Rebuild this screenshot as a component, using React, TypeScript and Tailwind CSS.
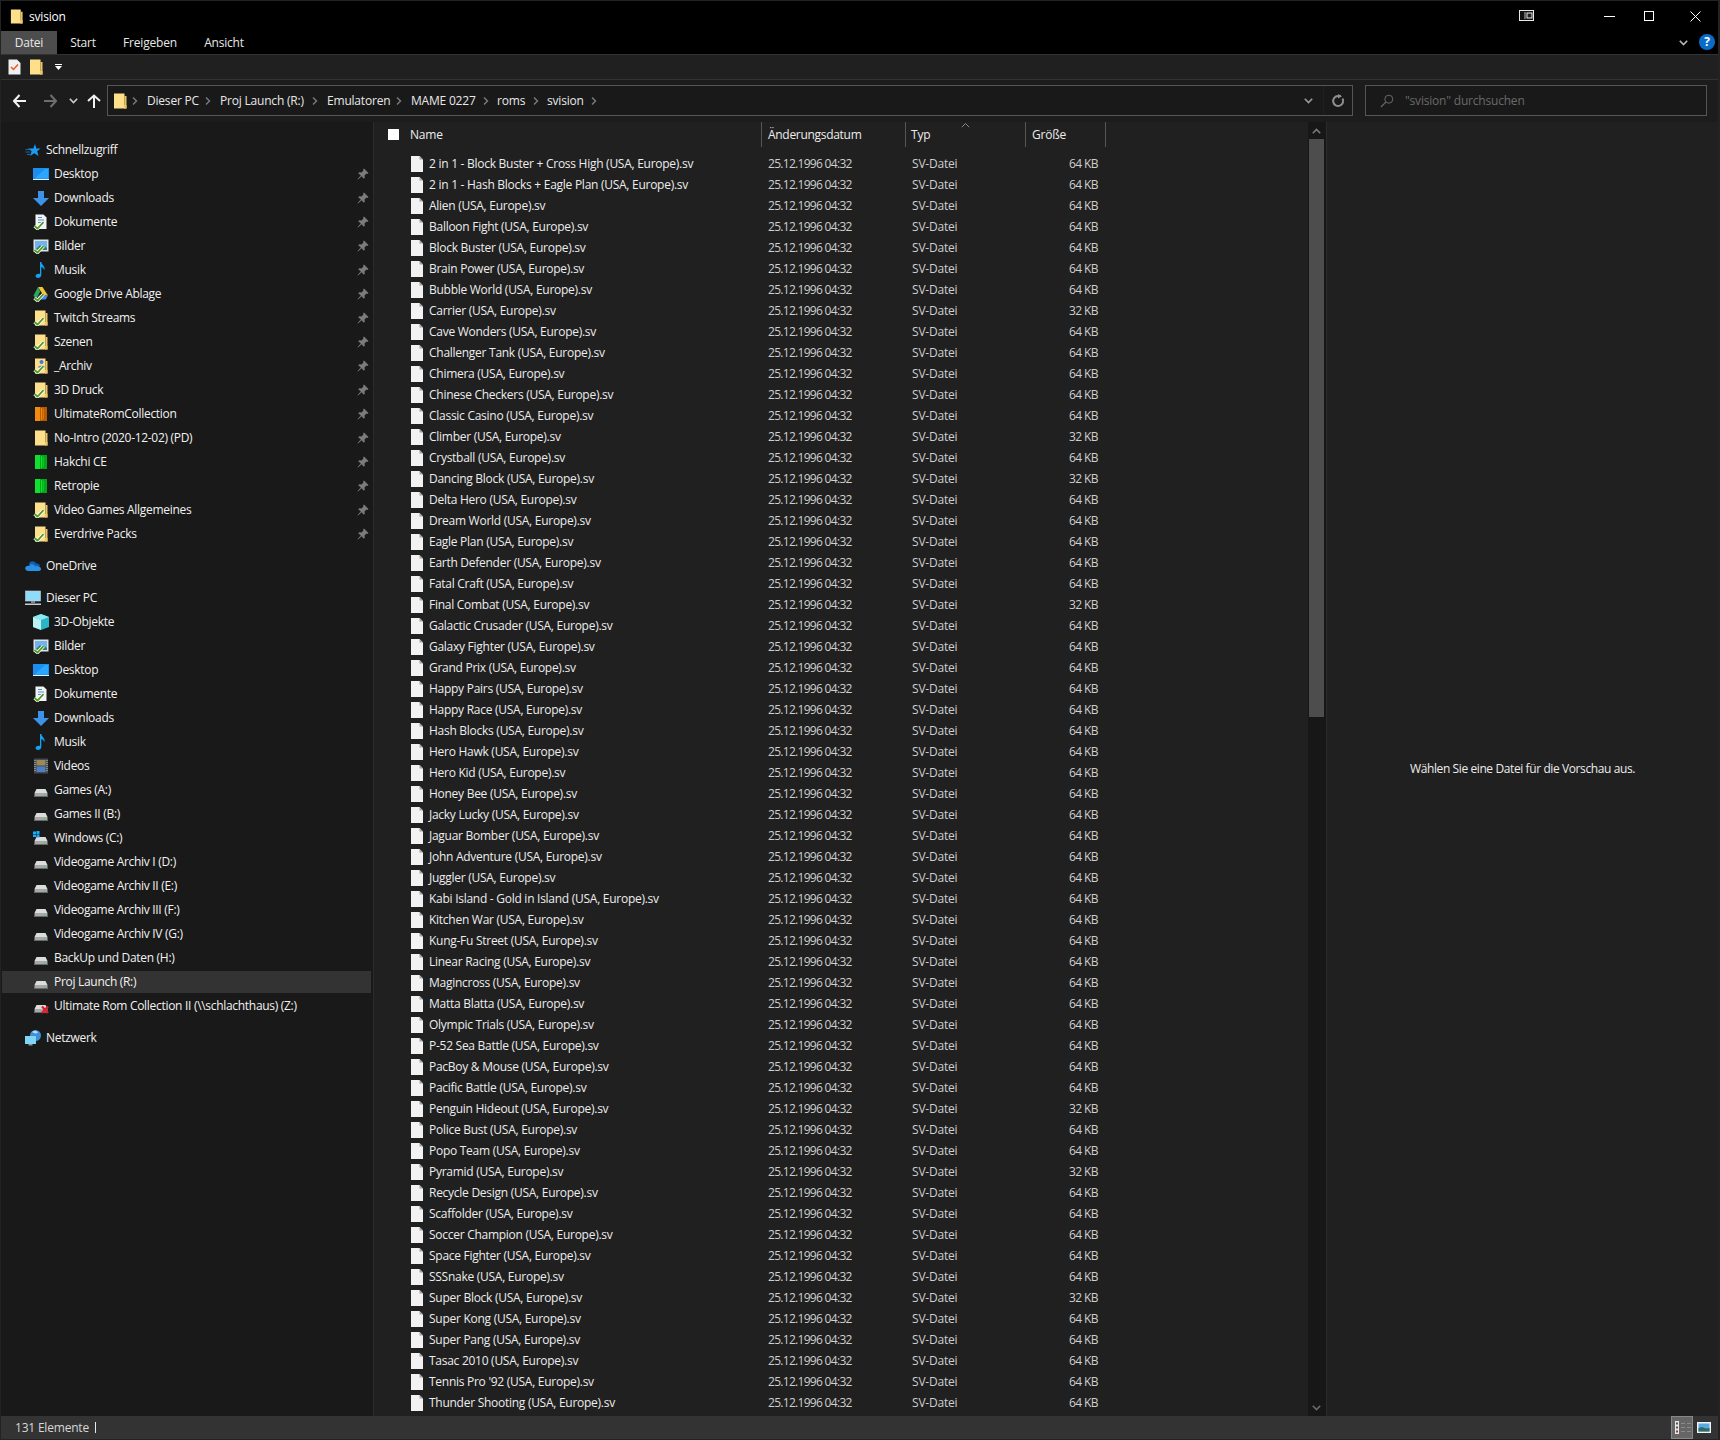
import React from 'react';

const files: [string, number][] = [
  ['2 in 1 - Block Buster + Cross High (USA, Europe).sv', 64],
  ['2 in 1 - Hash Blocks + Eagle Plan (USA, Europe).sv', 64],
  ['Alien (USA, Europe).sv', 64],
  ['Balloon Fight (USA, Europe).sv', 64],
  ['Block Buster (USA, Europe).sv', 64],
  ['Brain Power (USA, Europe).sv', 64],
  ['Bubble World (USA, Europe).sv', 64],
  ['Carrier (USA, Europe).sv', 32],
  ['Cave Wonders (USA, Europe).sv', 64],
  ['Challenger Tank (USA, Europe).sv', 64],
  ['Chimera (USA, Europe).sv', 64],
  ['Chinese Checkers (USA, Europe).sv', 64],
  ['Classic Casino (USA, Europe).sv', 64],
  ['Climber (USA, Europe).sv', 32],
  ['Crystball (USA, Europe).sv', 64],
  ['Dancing Block (USA, Europe).sv', 32],
  ['Delta Hero (USA, Europe).sv', 64],
  ['Dream World (USA, Europe).sv', 64],
  ['Eagle Plan (USA, Europe).sv', 64],
  ['Earth Defender (USA, Europe).sv', 64],
  ['Fatal Craft (USA, Europe).sv', 64],
  ['Final Combat (USA, Europe).sv', 32],
  ['Galactic Crusader (USA, Europe).sv', 64],
  ['Galaxy Fighter (USA, Europe).sv', 64],
  ['Grand Prix (USA, Europe).sv', 64],
  ['Happy Pairs (USA, Europe).sv', 64],
  ['Happy Race (USA, Europe).sv', 64],
  ['Hash Blocks (USA, Europe).sv', 64],
  ['Hero Hawk (USA, Europe).sv', 64],
  ['Hero Kid (USA, Europe).sv', 64],
  ['Honey Bee (USA, Europe).sv', 64],
  ['Jacky Lucky (USA, Europe).sv', 64],
  ['Jaguar Bomber (USA, Europe).sv', 64],
  ['John Adventure (USA, Europe).sv', 64],
  ['Juggler (USA, Europe).sv', 64],
  ['Kabi Island - Gold in Island (USA, Europe).sv', 64],
  ['Kitchen War (USA, Europe).sv', 64],
  ['Kung-Fu Street (USA, Europe).sv', 64],
  ['Linear Racing (USA, Europe).sv', 64],
  ['Magincross (USA, Europe).sv', 64],
  ['Matta Blatta (USA, Europe).sv', 64],
  ['Olympic Trials (USA, Europe).sv', 64],
  ['P-52 Sea Battle (USA, Europe).sv', 64],
  ['PacBoy & Mouse (USA, Europe).sv', 64],
  ['Pacific Battle (USA, Europe).sv', 64],
  ['Penguin Hideout (USA, Europe).sv', 32],
  ['Police Bust (USA, Europe).sv', 64],
  ['Popo Team (USA, Europe).sv', 64],
  ['Pyramid (USA, Europe).sv', 32],
  ['Recycle Design (USA, Europe).sv', 64],
  ['Scaffolder (USA, Europe).sv', 64],
  ['Soccer Champion (USA, Europe).sv', 64],
  ['Space Fighter (USA, Europe).sv', 64],
  ['SSSnake (USA, Europe).sv', 64],
  ['Super Block (USA, Europe).sv', 32],
  ['Super Kong (USA, Europe).sv', 64],
  ['Super Pang (USA, Europe).sv', 64],
  ['Tasac 2010 (USA, Europe).sv', 64],
  ["Tennis Pro '92 (USA, Europe).sv", 64],
  ['Thunder Shooting (USA, Europe).sv', 64],
];

function Check() {
  return (
    <g fill="none">
      <path d="M1.5 12 L4.5 14.5 L10.5 8.2" stroke="#fff" strokeWidth="3.4" />
      <path d="M1.5 12 L4.5 14.5 L10.5 8.2" stroke="#4b9a1c" strokeWidth="1.7" />
    </g>
  );
}

function Folder({ color = '#ffe08a', edge = '#e9c468', check, size = 16 }: { color?: string; edge?: string; check?: boolean; size?: number }) {
  return (
    <svg width={size} height={size} viewBox="0 0 16 16" className="shrink-0">
      <path d="M2 0.5 H12.5 V12 L14.5 12 V15.5 H2 Z" fill={color} />
      <path d="M12.5 3 H14.5 V15.5 H12 V12.5 H12.5 Z" fill={edge} />
      {check && <Check />}
    </svg>
  );
}

function BookFolder({ dark, light }: { dark: string; light: string }) {
  return (
    <svg width="16" height="16" viewBox="0 0 16 16" className="shrink-0">
      <rect x="2" y="1" width="12" height="14" fill={dark} />
      <rect x="2" y="1" width="5" height="14" fill={light} />
      <rect x="8" y="2" width="1.2" height="12" fill={light} />
      <rect x="10" y="3" width="1" height="10" fill={light} opacity="0.6" />
    </svg>
  );
}

function DriveIcon({ variant }: { variant?: 'win' | 'x' }) {
  return (
    <svg width="16" height="16" viewBox="0 0 16 16" className="shrink-0">
      <path d="M3.5 7 H12.5 L14.5 11 H1.5 Z" fill="#dcdcdc" />
      <rect x="1.5" y="11" width="13" height="4" fill="#a8a8a8" />
      <rect x="1.5" y="14" width="13" height="1" fill="#6a6a6a" />
      <rect x="11" y="12.5" width="1.4" height="1.2" fill="#3fd24a" />
      {variant === 'win' && (
        <g fill="#13b0ff">
          <rect x="0" y="1.5" width="3" height="2.5" />
          <rect x="3.5" y="1" width="3" height="3" />
          <rect x="0" y="4.5" width="3" height="2.5" />
          <rect x="3.5" y="4.5" width="3" height="3" />
        </g>
      )}
      {variant === 'x' && (
        <path d="M9 8.5 L15 15 M15 8.5 L9 15" fill="none" stroke="#e01a2a" strokeWidth="2.2" />
      )}
    </svg>
  );
}

function DesktopIcon() {
  return (
    <svg width="16" height="16" viewBox="0 0 16 16" className="shrink-0">
      <rect x="0" y="2" width="16" height="12" fill="#1a8ff0" />
      <path d="M1 13 L12 3 H15 V12.5 H1 Z" fill="#2aa6ff" />
      <rect x="0" y="13" width="16" height="1" fill="#e6f2ff" />
    </svg>
  );
}

function DownloadIcon() {
  return (
    <svg width="16" height="16" viewBox="0 0 16 16" className="shrink-0">
      <path d="M5 1 H11 V8 H16 L8 16 L0 8 H5 Z" fill="#3d93e8" />
    </svg>
  );
}

function DocIcon() {
  return (
    <svg width="16" height="16" viewBox="0 0 16 16" className="shrink-0">
      <path d="M2.5 0.5 H10.5 L13.5 3.5 V15 H2.5 Z" fill="#f3f3f3" />
      <path d="M5 3.5 H9 M5 6 H11 M5 8.5 H11" stroke="#4a90d9" strokeWidth="1" />
      <Check />
    </svg>
  );
}

function PicIcon() {
  return (
    <svg width="16" height="16" viewBox="0 0 16 16" className="shrink-0">
      <rect x="0.5" y="1.5" width="15" height="12" fill="#e2e2e2" />
      <rect x="2" y="3" width="12" height="9" fill="#6fb4ea" />
      <path d="M2 12 L7 7 L10 10 L12 8.5 L14 10 V12 Z" fill="#2f7d70" />
      <Check />
    </svg>
  );
}

function PicPlainIcon() {
  return (
    <svg width="14" height="11" viewBox="0 0 14 11" className="shrink-0">
      <rect x="0" y="0" width="14" height="11" fill="#f2f2f2" />
      <rect x="1.5" y="1.5" width="11" height="8" fill="#5ba8e6" />
      <path d="M1.5 9.5 V6 L5 5 L9 6.5 L12.5 6 V9.5 Z" fill="#2f6b60" />
    </svg>
  );
}

function MusicIcon() {
  return (
    <svg width="16" height="16" viewBox="0 0 16 16" className="shrink-0">
      <path d="M7 0 H8.3 C8.6 3 12.5 4 11.5 8.5 C11.2 6.5 9.8 5.5 8.3 5 V13 C8.3 14.8 6.6 16 5 16 C3.4 16 2.4 15 2.6 13.8 C2.8 12.4 5 11.4 7 12 Z" fill="#10a4f4" />
    </svg>
  );
}

function DriveFolderIcon() {
  return (
    <svg width="16" height="16" viewBox="0 0 16 16" className="shrink-0">
      <path d="M5 1 H9.5 L15 9.5 H10.5 Z" fill="#f2c533" />
      <path d="M5 1 L0.5 9.5 L3 13.5 L7.2 5.5 Z" fill="#2fa360" />
      <path d="M6 9.5 H15 L12.7 13.5 H4 Z" fill="#4688f0" />
      <Check />
    </svg>
  );
}

function FolderPersonIcon() {
  return (
    <svg width="16" height="16" viewBox="0 0 16 16" className="shrink-0">
      <path d="M2 0.5 H12.5 V12 L14.5 12 V15.5 H2 Z" fill="#ffe08a" />
      <path d="M12.5 3 H14.5 V15.5 H12 V12.5 H12.5 Z" fill="#e9c468" />
      <circle cx="8.5" cy="4" r="2" fill="#3f7ad6" />
      <path d="M5 9.5 C5 7 12 7 12 9.5 Z" fill="#3f7ad6" />
      <Check />
    </svg>
  );
}

function CloudIcon() {
  return (
    <svg width="16" height="16" viewBox="0 0 16 16" className="shrink-0">
      <path d="M4 6 C5 2.5 9.5 2.5 11 5.5 C13 5.2 14.5 6 15 8 L6 9 Z" fill="#0d5fb8" />
      <path d="M3.5 13 C1 13 0 11.5 0.3 10 C0.6 8.4 2.2 7.5 4 8 C5.5 5.5 9 6 10 8.3 C13 7.5 16 9 16 11 C16 12.3 15 13 14 13 Z" fill="#2b8fe6" />
    </svg>
  );
}

function PcIcon() {
  return (
    <svg width="16" height="16" viewBox="0 0 16 16" className="shrink-0">
      <rect x="0.5" y="1" width="15" height="10" fill="#8fdcfa" />
      <rect x="0.5" y="1" width="15" height="10" fill="none" stroke="#c7d0d6" strokeWidth="0.6" />
      <rect x="6" y="11" width="4" height="2" fill="#7d8a92" />
      <rect x="0" y="13.5" width="16" height="1.5" fill="#c8ced2" />
    </svg>
  );
}

function CubeIcon() {
  return (
    <svg width="16" height="16" viewBox="0 0 16 16" className="shrink-0">
      <path d="M8 0 L16 3 V13 L8 16 L0 13 V3 Z" fill="#2ab6c8" />
      <path d="M8 0 L16 3 L8 6 L0 3 Z" fill="#8ee8ef" />
      <path d="M0 3 L8 6 V16 L0 13 Z" fill="#b8f2f5" />
    </svg>
  );
}

function VideoIcon() {
  return (
    <svg width="16" height="16" viewBox="0 0 16 16" className="shrink-0">
      <rect x="1" y="0.5" width="14" height="15" fill="#454a4e" />
      <rect x="3.5" y="2" width="9" height="5.5" fill="#9a8a5a" />
      <rect x="3.5" y="8.5" width="9" height="5.5" fill="#4d7fc4" />
      <path d="M2 2 V14 M14 2 V14" stroke="#c4c8ca" strokeWidth="1" strokeDasharray="1 1" />
    </svg>
  );
}

function NetworkIcon() {
  return (
    <svg width="16" height="16" viewBox="0 0 16 16" className="shrink-0">
      <circle cx="10.5" cy="5.5" r="5.5" fill="#3f8ed8" />
      <path d="M7 2 C9 0 12 0.5 13 2.5 C11 4 9 3.5 7 2 Z" fill="#b5dbf5" />
      <rect x="0" y="6" width="11" height="8" fill="#7fd4f7" />
      <rect x="3.5" y="14" width="4" height="1.5" fill="#8a959c" />
    </svg>
  );
}

function StarIcon() {
  return (
    <svg width="16" height="16" viewBox="0 0 16 16" className="shrink-0">
      <path d="M10 2 L11.4 6.5 H15.5 L12.2 9.3 L13.5 14 L9.2 11.2 L5 14 L6.6 9.3 L3 6.5 H8.3 Z" fill="#1a9af0" />
      <path d="M0.5 7.5 H4 M0.5 10 H5 M2 12.5 H5" stroke="#1a7fc8" strokeWidth="0.8" />
    </svg>
  );
}

function PinIcon() {
  return (
    <svg width="12" height="12" viewBox="0 0 12 12" className="shrink-0">
      <path d="M7 0.5 L11.5 5 L10.5 6 L9.5 5.5 L7.5 7.5 L7.8 9.8 L6.8 10.8 L4.6 8.2 L1 11.5 L0.5 11 L3.8 7.4 L1.2 5.2 L2.2 4.2 L4.5 4.5 L6.5 2.5 L6 1.5 Z" fill="#7b7b7b" />
    </svg>
  );
}

function FileIcon() {
  return (
    <svg width="12" height="16" viewBox="0 0 12 16" className="shrink-0">
      <path d="M0 0 H8.5 L12 3.5 V16 H0 Z" fill="#f2f2f2" />
      <path d="M8.5 0 V3.5 H12 Z" fill="#a0a0a0" />
    </svg>
  );
}

function Chevron() {
  return (
    <svg width="6" height="8" viewBox="0 0 6 8" className="shrink-0">
      <path d="M1 0.5 L4.5 4 L1 7.5" fill="none" stroke="#7c7c7c" strokeWidth="1.4" />
    </svg>
  );
}

function DownCaret({ color = '#a8a8a8' }: { color?: string }) {
  return (
    <svg width="9" height="6" viewBox="0 0 9 6" className="shrink-0">
      <path d="M0.8 0.8 L4.5 4.5 L8.2 0.8" fill="none" stroke={color} strokeWidth="1.6" />
    </svg>
  );
}

function UpCaret({ color = '#8a8a8a', thin }: { color?: string; thin?: boolean }) {
  return (
    <svg width="9" height="6" viewBox="0 0 9 6" className="shrink-0">
      <path d="M0.8 5.2 L4.5 1.5 L8.2 5.2" fill="none" stroke={color} strokeWidth={thin ? 1 : 1.6} />
    </svg>
  );
}

function NavRow({ icon, label, pin, selected, top }: { icon: React.ReactNode; label: string; pin?: boolean; selected?: boolean; top?: boolean }) {
  return (
    <div className="h-6 py-px pl-[1px] pr-[2px]">
      <div className={`h-full flex items-center pr-[2px] ${top ? 'pl-[23px]' : 'pl-[31px]'} ${selected ? 'bg-[#333333]' : ''}`}>
        {icon}
        <span className="ml-[5px] flex-1 whitespace-nowrap">{label}</span>
        {pin && <PinIcon />}
      </div>
    </div>
  );
}

function Sidebar() {
  return (
    <aside className="w-[373px] shrink-0 bg-[#191919] pt-4 text-[#f2f2f2] border-r border-[#2b2b2b] overflow-hidden tracking-[-0.3px]">
      <NavRow top icon={<StarIcon />} label="Schnellzugriff" />
      <NavRow pin icon={<DesktopIcon />} label="Desktop" />
      <NavRow pin icon={<DownloadIcon />} label="Downloads" />
      <NavRow pin icon={<DocIcon />} label="Dokumente" />
      <NavRow pin icon={<PicIcon />} label="Bilder" />
      <NavRow pin icon={<MusicIcon />} label="Musik" />
      <NavRow pin icon={<DriveFolderIcon />} label="Google Drive Ablage" />
      <NavRow pin icon={<Folder check />} label="Twitch Streams" />
      <NavRow pin icon={<Folder check />} label="Szenen" />
      <NavRow pin icon={<FolderPersonIcon />} label="_Archiv" />
      <NavRow pin icon={<Folder check />} label="3D Druck" />
      <NavRow pin icon={<BookFolder dark="#b85a00" light="#f08a10" />} label="UltimateRomCollection" />
      <NavRow pin icon={<Folder />} label="No-Intro (2020-12-02) (PD)" />
      <NavRow pin icon={<BookFolder dark="#00a818" light="#10e030" />} label="Hakchi CE" />
      <NavRow pin icon={<BookFolder dark="#00a818" light="#10e030" />} label="Retropie" />
      <NavRow pin icon={<Folder check />} label="Video Games Allgemeines" />
      <NavRow pin icon={<Folder check />} label="Everdrive Packs" />
      <div className="h-2" />
      <NavRow top icon={<CloudIcon />} label="OneDrive" />
      <div className="h-2" />
      <NavRow top icon={<PcIcon />} label="Dieser PC" />
      <NavRow icon={<CubeIcon />} label="3D-Objekte" />
      <NavRow icon={<PicIcon />} label="Bilder" />
      <NavRow icon={<DesktopIcon />} label="Desktop" />
      <NavRow icon={<DocIcon />} label="Dokumente" />
      <NavRow icon={<DownloadIcon />} label="Downloads" />
      <NavRow icon={<MusicIcon />} label="Musik" />
      <NavRow icon={<VideoIcon />} label="Videos" />
      <NavRow icon={<DriveIcon />} label="Games (A:)" />
      <NavRow icon={<DriveIcon />} label="Games II (B:)" />
      <NavRow icon={<DriveIcon variant="win" />} label="Windows (C:)" />
      <NavRow icon={<DriveIcon />} label="Videogame Archiv I (D:)" />
      <NavRow icon={<DriveIcon />} label="Videogame Archiv II (E:)" />
      <NavRow icon={<DriveIcon />} label="Videogame Archiv III (F:)" />
      <NavRow icon={<DriveIcon />} label="Videogame Archiv IV (G:)" />
      <NavRow icon={<DriveIcon />} label="BackUp und Daten (H:)" />
      <NavRow selected icon={<DriveIcon />} label="Proj Launch (R:)" />
      <NavRow icon={<DriveIcon variant="x" />} label="Ultimate Rom Collection II (\\schlachthaus) (Z:)" />
      <div className="h-2" />
      <NavRow top icon={<NetworkIcon />} label="Netzwerk" />
    </aside>
  );
}

function HeaderCell({ label, className }: { label: string; className: string }) {
  return (
    <div className={`h-[25px] border-r border-[#555555] flex items-center pt-px ${className}`}>{label}</div>
  );
}

function FileList() {
  return (
    <div className="flex-1 min-w-0 flex flex-col overflow-hidden text-[#ededed]">
      <div className="relative flex pl-[14px] h-[31px] shrink-0">
        <div className="w-[22px] flex items-start pt-[7px]">
          <div className="w-[11px] h-[11px] bg-white" />
        </div>
        <HeaderCell label="Name" className="w-[352px]" />
        <HeaderCell label="Änderungsdatum" className="w-[144px] pl-[6px] tracking-[-0.3px]" />
        <HeaderCell label="Typ" className="w-[120px] pl-[5px]" />
        <HeaderCell label="Größe" className="w-[80px] pl-[6px]" />
        <div className="absolute left-[587px] top-0">
          <UpCaret color="#8a8a8a" thin />
        </div>
      </div>
      <div className="flex-1 overflow-hidden">
        {files.map(([name, size]) => (
          <div key={name} className="h-[21px] flex items-center pl-[37px] whitespace-nowrap">
            <FileIcon />
            <span className="w-[345px] pl-[6px] tracking-[-0.27px]">{name}</span>
            <span className="w-[144px] text-[#cfcfcf] tracking-[-0.7px]">25.12.1996 04:32</span>
            <span className="w-[118px] text-[#cfcfcf]">SV-Datei</span>
            <span className="w-[68px] text-right text-[#cfcfcf] tracking-[-0.6px]">{size} KB</span>
          </div>
        ))}
        <div className="h-[21px] flex items-center pl-[37px]">
          <FileIcon />
        </div>
      </div>
    </div>
  );
}

function ScrollBar() {
  return (
    <div className="w-[19px] shrink-0 bg-[#171717] border-r border-[#2b2b2b] flex flex-col items-center pr-px">
      <div className="h-[17px] w-full flex items-center justify-center">
        <UpCaret color="#7a7a7a" />
      </div>
      <div className="w-[15px] h-[578px] bg-[#4d4d4d]" />
      <div className="flex-1" />
      <div className="h-[17px] w-full flex items-center justify-center">
        <DownCaret color="#6a6a6a" />
      </div>
    </div>
  );
}

function AddressBar() {
  return (
    <div className="h-[42px] shrink-0 flex items-center bg-[#1c1c1c] pb-px">
      <div className="w-[106px] h-full flex items-center shrink-0 pl-[12px]">
        <svg width="14" height="14" viewBox="0 0 14 14" className="shrink-0">
          <path d="M6.5 1 L1 7 L6.5 13 M1.5 7 H13" fill="none" stroke="#f2f2f2" strokeWidth="2" />
        </svg>
        <svg width="14" height="14" viewBox="0 0 14 14" className="shrink-0 ml-[16px]">
          <path d="M7.5 1 L13 7 L7.5 13 M12.5 7 H1" fill="none" stroke="#6e6e6e" strokeWidth="2" />
        </svg>
        <div className="ml-[12px]">
          <DownCaret color="#cccccc" />
        </div>
        <svg width="14" height="14" viewBox="0 0 14 14" className="shrink-0 ml-[9px]">
          <path d="M1 7 L7 1.5 L13 7 M7 2 V14" fill="none" stroke="#f2f2f2" strokeWidth="2" />
        </svg>
      </div>
      <div className="w-[1246px] h-[31px] border border-[#555555] bg-[#191919] flex items-center text-[#e8e8e8] pl-[4px]">
        <Folder />
        <div className="ml-[4px]"><Chevron /></div>
        <span className="ml-[9px] w-[58px] whitespace-nowrap">Dieser PC</span>
        <Chevron />
        <span className="ml-[9px] w-[92px] whitespace-nowrap">Proj Launch (R:)</span>
        <Chevron />
        <span className="ml-[9px] w-[69px] whitespace-nowrap">Emulatoren</span>
        <Chevron />
        <span className="ml-[9px] w-[72px] whitespace-nowrap">MAME 0227</span>
        <Chevron />
        <span className="ml-[8px] w-[36px] whitespace-nowrap">roms</span>
        <Chevron />
        <span className="ml-[8px] w-[44px] whitespace-nowrap">svision</span>
        <Chevron />
        <div className="flex-1" />
        <DownCaret color="#9a9a9a" />
        <div className="w-px h-full bg-[#202020] ml-[10px]" />
        <svg width="14" height="14" viewBox="0 0 14 14" className="shrink-0 mx-[7px]">
          <path d="M11.5 4.5 A5 5 0 1 1 7 2 H10" fill="none" stroke="#8e8e8e" strokeWidth="2" />
          <path d="M7 0 L11 2.2 L7 4.5 Z" fill="#8e8e8e" />
        </svg>
      </div>
      <div className="ml-[12px] w-[342px] h-[31px] border border-[#555555] bg-[#191919] flex items-center text-[#6a6a6a] pl-[14px]">
        <svg width="14" height="14" viewBox="0 0 14 14" className="shrink-0">
          <circle cx="8.8" cy="5.2" r="4" fill="none" stroke="#6a6a6a" strokeWidth="1" />
          <path d="M5.8 8.2 L1 13" stroke="#6a6a6a" strokeWidth="1.2" />
        </svg>
        <span className="ml-[11px]">"svision" durchsuchen</span>
      </div>
    </div>
  );
}

export default function App() {
  return (
    <div className="w-[1720px] h-[1440px] flex flex-col bg-black overflow-hidden text-[12px] text-white border border-[#232323] border-r-2 [font-family:'Open_Sans',sans-serif] tracking-[-0.2px]">
      {/* title bar */}
      <div className="h-[30px] shrink-0 flex items-center pl-[8px]">
        <Folder size={15} />
        <span className="ml-[5px] pt-px">svision</span>
        <div className="flex-1" />
        <svg width="16" height="12" viewBox="0 0 16 12" className="shrink-0">
          <rect x="0.5" y="0.5" width="14" height="10" fill="#111" stroke="#e8e8e8" />
          <rect x="8" y="3" width="5" height="5" fill="#222" stroke="#e8e8e8" />
          <rect x="5" y="2" width="2" height="7" fill="#666" />
        </svg>
        <div className="w-[69px]" />
        <div className="w-[11px] h-px bg-white" />
        <div className="w-[29px]" />
        <div className="w-[10px] h-[10px] border border-white" />
        <div className="w-[36px]" />
        <svg width="11" height="11" viewBox="0 0 11 11" className="shrink-0 mr-[17px]">
          <path d="M0.5 0.5 L10.5 10.5 M10.5 0.5 L0.5 10.5" stroke="#fff" strokeWidth="1" />
        </svg>
      </div>
      {/* ribbon tabs */}
      <div className="h-[23px] shrink-0 flex items-stretch text-[#e8e8e8]">
        <div className="w-[56px] bg-[#4d4d4d] flex items-center justify-center pt-px">Datei</div>
        <div className="w-[52px] flex items-center justify-center pt-px">Start</div>
        <div className="w-[82px] flex items-center justify-center pt-px">Freigeben</div>
        <div className="w-[66px] flex items-center justify-center pt-px">Ansicht</div>
        <div className="flex-1" />
        <div className="flex items-center">
          <DownCaret color="#b8b8b8" />
        </div>
        <div className="ml-[11px] mr-[3px] w-4 h-4 mt-[3px] rounded-full bg-[#0a6cc8] flex items-center justify-center text-white font-bold text-[12px] leading-none">?</div>
      </div>
      {/* quick access */}
      <div className="h-[26px] shrink-0 bg-[#202020] border-t border-[#333333] border-b flex items-center pl-[7px]">
        <svg width="13" height="16" viewBox="0 0 13 16" className="shrink-0">
          <path d="M0.5 0.5 H9 L12.5 4 V15.5 H0.5 Z" fill="#f0f0f0" />
          <path d="M3 8 L5.5 10.5 L10 5.5" fill="none" stroke="#e85a20" strokeWidth="1.5" />
        </svg>
        <div className="ml-[7px]"><Folder /></div>
        <div className="ml-[11px] flex flex-col items-center gap-px">
          <div className="w-[7px] h-px bg-white" />
          <svg width="7" height="4" viewBox="0 0 7 4"><path d="M0 0 H7 L3.5 4 Z" fill="#fff" /></svg>
        </div>
      </div>
      <AddressBar />
      {/* main */}
      <div className="flex-1 min-h-0 flex bg-[#202020]">
        <Sidebar />
        <FileList />
        <ScrollBar />
        <div className="w-[391px] shrink-0 flex items-center justify-center text-[#ededed] pb-px tracking-[-0.4px]">
          Wählen Sie eine Datei für die Vorschau aus.
        </div>
      </div>
      {/* status bar */}
      <div className="h-[23px] shrink-0 bg-[#333333] flex items-center pl-[14px] text-[#d8d8d8]">
        <span className="w-[70px] whitespace-nowrap">131 Elemente</span>
        <div className="ml-[10px] w-px h-[11px] bg-[#e8e8e8]" />
        <div className="flex-1" />
        <div className="w-[22px] h-full bg-[#666666] border border-[#888888] flex items-center pl-[3px]">
          <svg width="16" height="13" viewBox="0 0 16 13" className="shrink-0">
            <rect x="0" y="0" width="4" height="13" fill="#e8e8e8" />
            <rect x="1" y="1.5" width="2" height="2" fill="#555" />
            <rect x="1" y="5.5" width="2" height="2" fill="#555" />
            <rect x="1" y="9.5" width="2" height="2" fill="#a33" />
            <path d="M6 2.5 H10 M12 2.5 H16 M6 6.5 H10 M12 6.5 H16 M6 10.5 H10 M12 10.5 H16" stroke="#8a8a8a" strokeWidth="1" />
          </svg>
        </div>
        <div className="ml-[4px] mr-[7px]"><PicPlainIcon /></div>
      </div>
    </div>
  );
}
